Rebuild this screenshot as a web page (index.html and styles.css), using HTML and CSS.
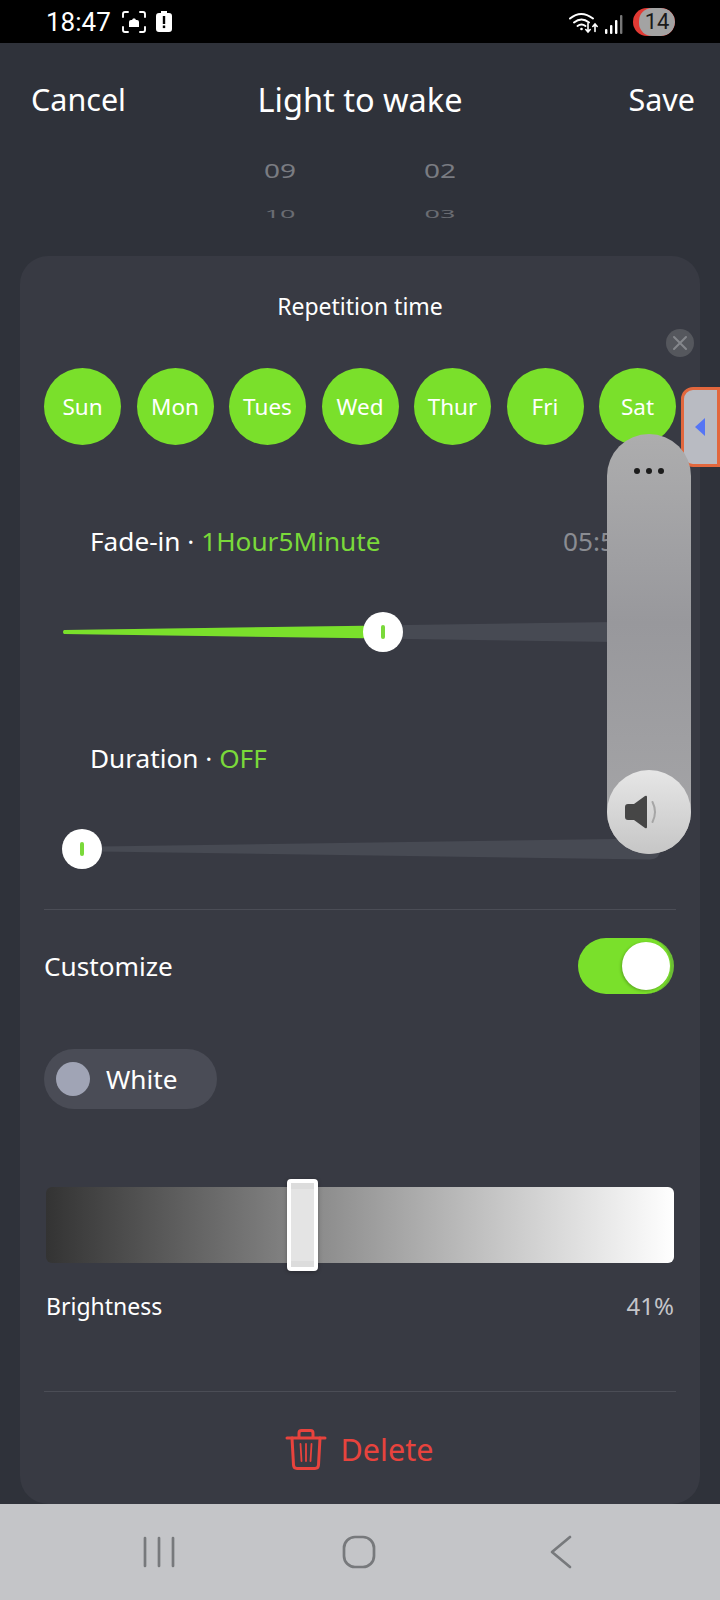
FILE: index.html
```html
<!DOCTYPE html>
<html lang="en">
<head>
  <meta charset="UTF-8" />
  <title>Light to wake</title>
  <link rel="stylesheet" href="styles.css">
</head>
<body>
<div class="phone">

  <div class="status">
    <span class="clock">18:47</span>
    <svg class="ic-shot" width="26" height="24" viewBox="0 0 26 24" fill="none" stroke="#fff" stroke-width="1.900" stroke-linecap="round">
      <path d="M2 7V4q0-2 2-2h3M19 2h3q2 0 2 2v3M24 17v3q0 2-2 2h-3M7 22H4q-2 0-2-2v-3"/>
      <path d="M8 17v-5q0-2 2-2h1l1-1.500h2l1 1.500h1q2 0 2 2v5z" fill="#fff" stroke="none"/>
    </svg>
    <svg class="ic-batt" width="16" height="21" viewBox="0 0 16 21">
      <path d="M5 0h6v2h2q3 0 3 3v13q0 3-3 3H3q-3 0-3-3V5q0-3 3-3h2z" fill="#fff"/>
      <rect x="6.800" y="5" width="2.400" height="8" fill="#000"/>
      <rect x="6.800" y="14.500" width="2.400" height="2.600" fill="#000"/>
    </svg>
    <span class="status-gap"></span>
    <svg class="ic-wifi" width="30" height="22" viewBox="0 0 30 22" fill="none" stroke="#fff" stroke-width="2" stroke-linecap="round">
      <path d="M1 6.500q11-9 23 0"/>
      <path d="M5 10.500q7.500-6 15 0"/>
      <path d="M8.500 14q4-3 8 0"/>
      <circle cx="12.500" cy="17" r="1.300" fill="#fff" stroke="none"/>
      <path d="M19 11.500v8M16.800 17.500l2.200 2.500 2.200-2.500" stroke-width="1.600"/>
      <path d="M26 19.500v-7M23.800 14.500l2.200-2.500 2.200 2.500" stroke-width="1.600"/>
    </svg>
    <svg class="ic-signal" width="18" height="19" viewBox="0 0 18 19">
      <rect x="0" y="14" width="2.400" height="5" rx="1" fill="#fff"/>
      <rect x="5" y="10" width="2.400" height="9" rx="1" fill="#fff"/>
      <rect x="10" y="5" width="2.400" height="14" rx="1" fill="#fff"/>
      <rect x="15" y="0" width="2.400" height="19" rx="1" fill="#777"/>
    </svg>
    <span class="batt-badge"><span class="batt-num">14</span></span>
  </div>

  <div class="topbar">
    <span class="topbar-cancel">Cancel</span>
    <span class="topbar-title">Light to wake</span>
    <span class="topbar-save">Save</span>
  </div>

  <div class="picker">
    <div class="picker-col">
      <span class="picker-near">09</span>
      <span class="picker-far">10</span>
    </div>
    <div class="picker-col">
      <span class="picker-near">02</span>
      <span class="picker-far">03</span>
    </div>
  </div>

  <div class="card">
    <div class="card-title">Repetition time</div>

    <div class="days">
      <span class="day">Sun</span>
      <span class="day">Mon</span>
      <span class="day">Tues</span>
      <span class="day">Wed</span>
      <span class="day">Thur</span>
      <span class="day">Fri</span>
      <span class="day">Sat</span>
    </div>

    <div class="fade-row first">
      <span>Fade-in · <em>1Hour5Minute</em></span>
      <span class="fade-time">05:50</span>
    </div>
    <div class="wedge">
      <svg width="614" height="40" viewBox="0 0 614 40">
        <path d="M2 18 L588 9.500 Q598 9.500 598 20 Q598 30.500 588 30.500 L2 22 Q0 20 2 18z" fill="#474a53"/>
        <path d="M2 18 L322 13.500 L322 26.500 L2 22 Q0 20 2 18z" fill="#7ae02b"/>
      </svg>
      <span class="knob" style="left: 301px"><i></i></span>
    </div>

    <div class="fade-row second">
      <span>Duration · <em>OFF</em></span>
    </div>
    <div class="wedge">
      <svg width="614" height="40" viewBox="0 0 614 40">
        <path d="M2 18 L588 9.500 Q598 9.500 598 20 Q598 30.500 588 30.500 L2 22 Q0 20 2 18z" fill="#474a53"/>
      </svg>
      <span class="knob" style="left: 0"><i></i></span>
    </div>

    <div class="line line-top"></div>

    <div class="custom-row">
      <span>Customize</span>
      <span class="toggle"><span class="toggle-dot"></span></span>
    </div>

    <div class="chip">
      <span class="chip-dot"></span>
      <span>White</span>
    </div>

    <div class="bright-bar">
      <span class="bright-thumb" style="left: 241px"></span>
    </div>
    <div class="bright-row">
      <span>Brightness</span>
      <span class="bright-val">41%</span>
    </div>

    <div class="line line-bottom"></div>

    <div class="delete">
      <svg width="42" height="41" viewBox="0 0 42 41" fill="none" stroke="#e8433d" stroke-width="3" stroke-linejoin="round" stroke-linecap="round">
        <path d="M2 9h38"/>
        <path d="M14 8V4q0-2.500 2.500-2.500h9Q28 1.500 28 4v4"/>
        <path d="M7 9l1.500 27q.2 3.500 3.500 3.500h18q3.300 0 3.500-3.500L35 9"/>
        <path d="M15.500 15l1 17M21 15v17M26.500 15l-1 17" stroke-width="1.800"/>
      </svg>
      <span>Delete</span>
    </div>
  </div>

  <div class="navbar">
    <svg width="32" height="32" viewBox="0 0 32 32" fill="none" stroke="#77797c" stroke-width="2.700" stroke-linecap="round">
      <path d="M2 2v28M16 2v28M30 2v28"/>
    </svg>
    <svg class="nav-home" width="34" height="34" viewBox="0 0 34 34" fill="none" stroke="#77797c" stroke-width="2.700">
      <rect x="2" y="2" width="30" height="30" rx="11"/>
    </svg>
    <svg width="24" height="34" viewBox="0 0 24 34" fill="none" stroke="#77797c" stroke-width="2.700" stroke-linecap="round" stroke-linejoin="round">
      <path d="M21 2L3 17l18 15"/>
    </svg>
  </div>

  <!-- overlay volume panel, dari aplikasi lain -->
  <span class="close-btn">
    <svg width="16" height="16" viewBox="0 0 16 16" fill="none" stroke="#85878c" stroke-width="2" stroke-linecap="round">
      <path d="M2 2l12 12M14 2L2 14"/>
    </svg>
  </span>
  <span class="side-tab"><span class="side-arrow"></span></span>
  <div class="vol-panel">
    <div class="vol-dots"><i></i><i></i><i></i></div>
    <div class="vol-knob">
      <svg width="34" height="34" viewBox="0 0 34 34">
        <path d="M3 9h6L20 1q2-1 2 1v30q0 2-2 1L9 25H3q-3 0-3-3V12q0-3 3-3z" fill="#464646"/>
        <path d="M27.500 7q5 10 0 20" fill="none" stroke="#a6a6a6" stroke-width="2" stroke-linecap="round"/>
      </svg>
    </div>
  </div>

</div>
</body>
</html>
```

FILE: styles.css
```css
* {
  box-sizing: border-box;
}
body {
  margin: 0;
  font-family: "Noto Sans", sans-serif;
  color: #fff;
}
.phone {
  position: relative;
  width: 720px;
  height: 1600px;
  overflow: hidden;
  background-color: #2f323a;
  display: flex;
  flex-direction: column;
}

/* status bar */
.status {
  height: 43px;
  background-color: #000;
  display: flex;
  align-items: center;
  padding-left: 46px;
  padding-right: 45px;
}
.clock {
  font-family: Roboto, sans-serif;
  font-size: 26px;
  margin-right: 10px;
}
.ic-batt {
  margin-left: 9px;
}
.status-gap {
  flex: 1;
}
.ic-wifi {
  margin-top: 2px;
}
.ic-signal {
  margin-left: 6px;
  margin-top: 5px;
}
.batt-badge {
  margin-left: 10px;
  width: 42px;
  height: 28px;
  border-radius: 14px;
  background-color: #e23a34;
  overflow: hidden;
  display: flex;
  justify-content: flex-end;
}
.batt-num {
  width: 36px;
  height: 28px;
  border-radius: 13px 14px 14px 13px;
  background-color: #a3a3a3;
  color: #1a1a1a;
  font-family: Roboto, sans-serif;
  font-size: 22px;
  line-height: 28px;
  text-align: center;
}

/* header */
.topbar {
  height: 112px;
  display: grid;
  grid-template-columns: 1fr auto 1fr;
  align-items: center;
  padding: 0 25px;
  font-size: 30.500px;
}
.topbar-cancel {
  margin-left: 6px;
}
.topbar-title {
  font-size: 32.500px;
}
.topbar-save {
  justify-self: end;
}

.picker {
  height: 76px;
  margin-bottom: 25px;
  display: flex;
  justify-content: center;
  gap: 130px;
  color: #7a7c82;
  overflow: hidden;
}
.picker-col {
  width: 30px;
  display: flex;
  flex-direction: column;
  align-items: center;
}
.picker-near {
  margin-top: -1px;
  font-size: 28px;
  line-height: 32px;
  transform: scaleY(.7);
}
.picker-far {
  margin-top: 20px;
  font-size: 27px;
  line-height: 16px;
  transform: scaleY(.4);
  color: #6a6c72;
}

/* card */
.card {
  flex: 1;
  margin: 0 20px;
  padding: 0 24px;
  background-color: #383a43;
  border-radius: 28px;
}
.card-title {
  margin-top: 32px;
  text-align: center;
  font-size: 23px;
  line-height: 36px;
}
.days {
  margin-top: 44px;
  display: flex;
  justify-content: space-between;
}
.day {
  width: 77px;
  height: 77px;
  border-radius: 50%;
  background-color: #7ae02b;
  display: flex;
  align-items: center;
  justify-content: center;
  font-size: 22.500px;
}
.fade-row {
  padding: 0 46px;
  display: flex;
  justify-content: space-between;
  font-size: 26.200px;
  line-height: 40px;
}
.fade-row.first {
  margin-top: 76px;
}
.fade-row.second {
  margin-top: 86px;
}
.fade-row em {
  font-style: normal;
  color: #7ad93a;
}
.fade-time {
  color: #8a8c92;
}
.wedge {
  position: relative;
  height: 40px;
  margin-top: 51px;
  margin-left: 18px;
}
.wedge svg {
  display: block;
}
.knob {
  position: absolute;
  top: 0;
  width: 40px;
  height: 40px;
  border-radius: 50%;
  background-color: #fff;
  display: flex;
  align-items: center;
  justify-content: center;
}
.knob i {
  width: 4px;
  height: 14px;
  border-radius: 2px;
  background-color: #7ad93a;
}
.line {
  height: 1px;
  background-color: #4b4d56;
}
.line-top {
  margin-top: 40px;
}
.custom-row {
  margin-top: 28px;
  display: flex;
  justify-content: space-between;
  align-items: center;
  font-size: 26.200px;
}
.toggle {
  width: 96px;
  height: 56px;
  border-radius: 28px;
  background-color: #7ae02b;
  border-right: 3px solid #6cbf34;
  margin-right: 2px;
  position: relative;
}
.toggle-dot {
  position: absolute;
  top: 4px;
  right: 1px;
  width: 48px;
  height: 48px;
  border-radius: 50%;
  background-color: #fff;
  box-shadow: -1px 1px 3px rgba(0, 0, 0, .25);
}
.chip {
  margin-top: 55px;
  width: 173px;
  height: 60px;
  border-radius: 30px;
  background-color: #4a4c56;
  display: flex;
  align-items: center;
  gap: 16px;
  padding-left: 12px;
  font-size: 26.200px;
}
.chip-dot {
  width: 34px;
  height: 34px;
  border-radius: 50%;
  background-color: #a0a4b5;
}
.bright-bar {
  position: relative;
  margin: 78px 2px 0 2px;
  height: 76px;
  border-radius: 6px;
  background: linear-gradient(to right, #333, #fff);
}
.bright-thumb {
  position: absolute;
  top: -8px;
  width: 31px;
  height: 92px;
  border: 4px solid #fff;
  border-radius: 4px;
  background: linear-gradient(to bottom, #dcdcdc 7%, #e4e4e4 7%, #e4e4e4 93%, #dcdcdc 93%);
  box-shadow: 0 1px 4px rgba(0, 0, 0, .3);
}
.bright-row {
  margin: 25px 2px 0 2px;
  display: flex;
  justify-content: space-between;
  font-size: 23px;
  line-height: 36px;
}
.bright-val {
  color: #c4c5c9;
  font-size: 24px;
}
.line-bottom {
  margin-top: 67px;
}
.delete {
  margin-top: 36px;
  padding-right: 2px;
  display: flex;
  justify-content: center;
  align-items: center;
  gap: 14px;
  color: #e8433d;
  font-size: 30.500px;
}

/* nav bar */
.navbar {
  height: 96px;
  background-color: #c4c5c8;
  display: flex;
  align-items: center;
  justify-content: space-between;
  padding: 0 147px 0 143px;
}
.nav-home {
  margin-right: 6px;
}

/* overlay */
.close-btn {
  position: absolute;
  left: 666px;
  top: 329px;
  width: 28px;
  height: 28px;
  border-radius: 50%;
  background-color: #55575d;
  display: flex;
  align-items: center;
  justify-content: center;
}
.side-tab {
  position: absolute;
  left: 681px;
  top: 387px;
  width: 39px;
  height: 80px;
  background-color: #b9bbc2;
  border: 3px solid #e2673d;
  border-radius: 12px 0 0 12px;
  display: flex;
  align-items: center;
}
.side-arrow {
  margin-left: 11px;
  border-style: solid;
  border-width: 9px 10px 9px 0;
  border-color: transparent #5575f5 transparent transparent;
}
.vol-panel {
  position: absolute;
  left: 607px;
  top: 434px;
  width: 84px;
  height: 420px;
  border-radius: 42px;
  background: linear-gradient(to bottom, #adadae, #98989c 45%, #a6a6a8);
  display: flex;
  flex-direction: column;
  justify-content: space-between;
  align-items: center;
}
.vol-dots {
  margin-top: 34px;
  display: flex;
  gap: 6px;
}
.vol-dots i {
  width: 6px;
  height: 6px;
  border-radius: 50%;
  background-color: #1c1c1c;
}
.vol-knob {
  width: 84px;
  height: 84px;
  padding-right: 14px;
  border-radius: 50%;
  background: linear-gradient(to bottom, #e6e6e6, #c6c6c6);
  display: flex;
  align-items: center;
  justify-content: center;
}
```
